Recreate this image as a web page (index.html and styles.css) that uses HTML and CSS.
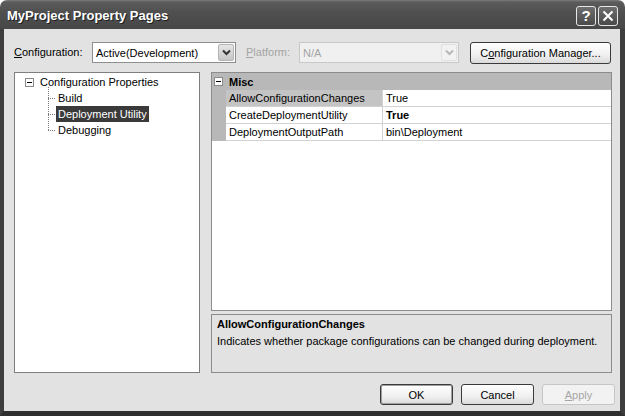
FILE: index.html
```html
<!DOCTYPE html>
<html>
<head>
<meta charset="utf-8">
<link rel="stylesheet" href="styles.css">
</head>
<body>
<div class="window">
  <div class="titlebar">
    <span class="title">MyProject Property Pages</span>
    <div class="caption-buttons">
      <span class="cap-btn help">?</span>
      <span class="cap-btn close"><svg width="12" height="12" viewBox="0 0 12 12"><path d="M1.5 1.5 L10.5 10.5 M10.5 1.5 L1.5 10.5" stroke="#fff" stroke-width="2" fill="none"/></svg></span>
    </div>
  </div>
  <div class="frame">
    <div class="content">
      <div class="toolbar">
        <span class="lbl cfg-lbl"><u>C</u>onfiguration:</span>
        <div class="combo cfg-combo">
          <span class="combo-text">Active(Development)</span>
          <span class="arrow"><svg width="9" height="7" viewBox="0 0 9 7"><path d="M1 1.5 L4.5 5 L8 1.5" stroke="#333" stroke-width="2" fill="none"/></svg></span>
        </div>
        <span class="lbl plat-lbl"><u>P</u>latform:</span>
        <div class="combo plat-combo">
          <span class="combo-text">N/A</span>
          <span class="arrow"><svg width="9" height="7" viewBox="0 0 9 7"><path d="M1 1.5 L4.5 5 L8 1.5" stroke="#b8b8b8" stroke-width="2" fill="none"/></svg></span>
        </div>
        <div class="btn mgr-btn">C<u>o</u>nfiguration Manager...</div>
      </div>
      <div class="main">
        <div class="tree">
          <div class="tree-row"><span class="expander"></span><span>Configuration Properties</span></div>
          <div class="children">
            <div class="child"><span>Build</span></div>
            <div class="child selected"><span>Deployment Utility</span></div>
            <div class="child"><span>Debugging</span></div>
          </div>
        </div>
        <div class="right">
          <div class="grid">
            <div class="cat"><span class="expander"></span><span>Misc</span></div>
            <div class="prow sel"><span class="margin"></span><span class="name">AllowConfigurationChanges</span><span class="value">True</span></div>
            <div class="prow"><span class="margin"></span><span class="name">CreateDeploymentUtility</span><span class="value bold">True</span></div>
            <div class="prow"><span class="margin"></span><span class="name">DeploymentOutputPath</span><span class="value">bin\Deployment</span></div>
          </div>
          <div class="desc">
            <div class="desc-title">AllowConfigurationChanges</div>
            <div class="desc-text">Indicates whether package configurations can be changed during deployment.</div>
          </div>
        </div>
      </div>
      <div class="buttons">
        <div class="btn default">OK</div>
        <div class="btn">Cancel</div>
        <div class="btn disabled"><u>A</u>pply</div>
      </div>
    </div>
  </div>
</div>
</body>
</html>
```
FILE: styles.css
```css
* { box-sizing: border-box; }
html, body { margin: 0; padding: 0; width: 625px; height: 416px; overflow: hidden; background: #fff; }
body { font-family: "Liberation Sans", Arial, sans-serif; font-size: 11px; color: #000; }

.window { width: 625px; height: 416px; display: flex; flex-direction: column; }

.titlebar {
  height: 29px; flex: none; display: flex; justify-content: space-between; align-items: flex-start;
  padding: 0 7px 0 7px;
  background: linear-gradient(#7c7c7c 0, #5c5c5c 2px, #505050 40%, #474747 100%);
  border-radius: 7px 7px 0 0;
}
.title { color: #fff; font-weight: bold; font-size: 13px; line-height: 16px; margin-top: 8px; text-shadow: 1px 1px 0 #1e1e1e; }
.caption-buttons { display: flex; gap: 2px; margin-top: 6px; }
.cap-btn {
  width: 20px; height: 20px; border: 1px solid #e6e6e6; border-radius: 3px;
  background: linear-gradient(#6e6e6e, #4a4a4a);
  color: #fff; font-weight: bold; font-size: 15px; line-height: 18px;
  display: flex; align-items: center; justify-content: center;
}

.frame { flex: 1; display: flex; min-height: 0; border-left: 4px solid #3e3e3e; border-right: 5px solid #3e3e3e; border-bottom: 5px solid #2f2f2f; }
.content { flex: 1; background: #e2e2e2; display: flex; flex-direction: column; padding: 13px 5px 6px 10px; }

.toolbar { height: 22px; display: flex; align-items: flex-start; flex: none; }
.lbl { line-height: 21px; }
.cfg-lbl { width: 78px; }
.plat-lbl { width: 53px; margin-left: 10px; color: #a4a4a4; }
.combo { height: 21px; border: 1px solid #8e8e8e; background: #fff; display: flex; align-items: center; padding-left: 3px; }
.cfg-combo { width: 144px; }
.plat-combo { width: 160px; border-color: #c8c8c8; background: #f0f0f0; color: #a4a4a4; }
.arrow {
  margin-left: auto; margin-right: 1px; width: 16px; height: 17px; border-radius: 2px;
  border: 1px solid #b4b4b4; background: linear-gradient(#e6e6e6, #c6c6c6);
  display: flex; align-items: center; justify-content: center;
}
.plat-combo .arrow { border-color: #e0e0e0; background: #f2f2f2; }

.btn {
  width: 73px; height: 21px; border: 1px solid #3a3a3a; border-radius: 3px;
  background: linear-gradient(#ffffff, #f0f0f0 60%, #dadada);
  display: flex; align-items: center; justify-content: center;
}
.mgr-btn { width: 141px; height: 22px; margin-left: 11px; }
.btn.default { box-shadow: inset 0 0 0 1px #a0a0a0; }
.btn.disabled { border-color: #c6c6c6; color: #a6a6a6; background: #f2f2f2; }

.main { display: flex; gap: 11px; margin-top: 8px; height: 301px; margin-right: 3px; flex: none; }

.tree { width: 186px; background: #fff; border: 1px solid #7f7f7f; padding: 1px 0 0 10px; }
.tree-row { height: 16px; display: flex; align-items: center; }
.expander { width: 9px; height: 9px; border: 1px solid #8a8a8a; background: #fff; position: relative; margin-right: 6px; flex: none; }
.expander::after { content: ""; position: absolute; left: 1px; top: 3px; width: 5px; height: 1px; background: #000; }
.children { margin-left: 23px; padding-left: 8px; position: relative; }
.children::before { content: ""; position: absolute; left: 0; top: -3px; height: 43px; border-left: 1px dotted #7a7a7a; }
.child { height: 16px; display: flex; align-items: center; position: relative; }
.child::before { content: ""; position: absolute; left: -8px; top: 8px; width: 7px; border-top: 1px dotted #7a7a7a; }
.child span { padding: 0 2px; line-height: 16px; }
.child.selected span { background: #3a3a3a; color: #fff; }

.right { flex: 1; display: flex; flex-direction: column; }
.grid { height: 239px; border: 1px solid #8c8c8c; background: #fff; display: flex; flex-direction: column; flex: none; }
.cat { height: 17px; background: #b8b8b8; display: flex; align-items: center; font-weight: bold; padding-left: 2px; }
.prow { height: 17px; display: flex; }
.prow .margin { width: 14px; background: #b8b8b8; }
.prow .name { width: 157px; padding-left: 3px; border-bottom: 1px solid #d2d2d2; border-right: 1px solid #d2d2d2; display: flex; align-items: center; }
.prow .value { flex: 1; padding-left: 3px; border-bottom: 1px solid #d2d2d2; display: flex; align-items: center; }
.prow.sel .name { background: #c4c4c4; }
.bold { font-weight: bold; }

.desc { height: 59px; margin-top: 3px; border: 1px solid #8c8c8c; padding: 1px 5px; flex: none; }
.desc-title { font-weight: bold; line-height: 16px; }
.desc-text { line-height: 18px; }

.buttons { margin-top: 11px; display: flex; justify-content: flex-end; gap: 8px; height: 21px; flex: none; }
```
